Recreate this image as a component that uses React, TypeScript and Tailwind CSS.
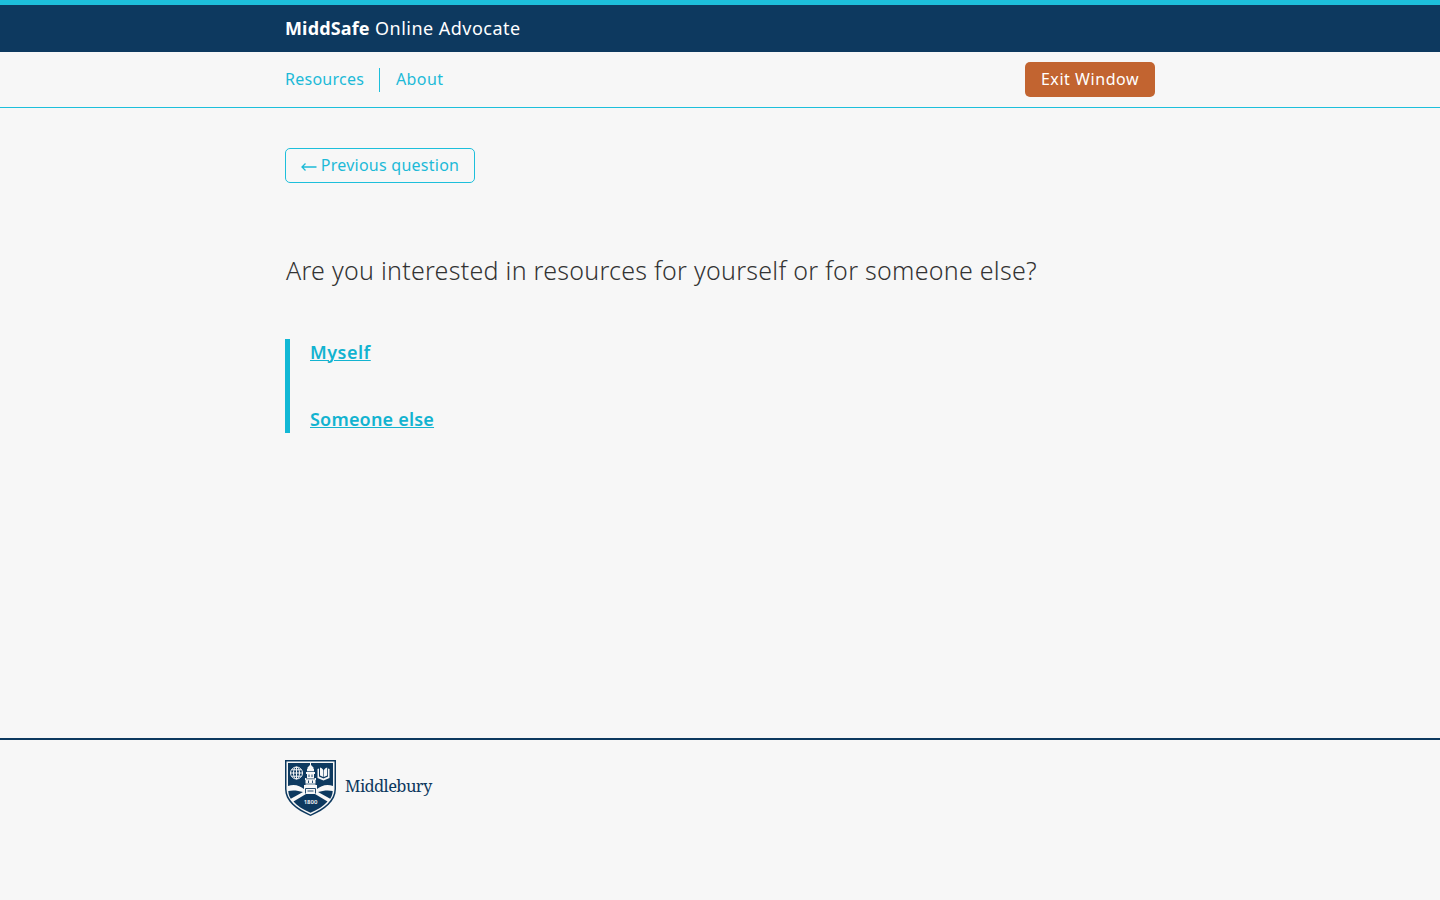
function Shield() {
  return (
    <svg width="51" height="56" viewBox="0 0 51 56" className="block shrink-0" aria-hidden="true">
      <path d="M0 0H51V29C51 41 40 50 25.500 56C11 50 0 41 0 29Z" fill="#0d395f" />
      <path d="M1.500 1.500H49.500V29C49.500 40 39 48.600 25.500 54.400C12 48.600 1.500 40 1.500 29Z" fill="#f7f7f7" />
      <path d="M3 3H48V26C42 23.500 36 25.500 32 29H19C15 25.500 9 23.500 3 26Z" fill="#0d395f" />
      <path d="M8.500 41.500L21 34H30L42.500 41.500C38.500 46 33 49.600 25.500 52.800C18 49.600 12.500 46 8.500 41.500Z" fill="#0d395f" />
      <path d="M3.300 31C8 30 13 30.500 18 32L5.800 38.800C4.300 36.500 3.500 34 3.300 31ZM47.700 31C43 30 38 30.500 33 32L45.200 38.800C46.700 36.500 47.500 34 47.700 31Z" fill="#0d395f" />
      <g fill="none" stroke="#f7f7f7" strokeWidth="1">
        <circle cx="11.500" cy="13" r="6" />
        <ellipse cx="11.500" cy="13" rx="3" ry="6" />
        <path d="M11.500 7V19M5.500 13H17.500M6.700 9.800H16.300M6.700 16.200H16.300" />
      </g>
      <path d="M32.500 9L34 8.500V16.500L38.500 18.500L43 16.500V8.500L44.500 9V18L38.500 20.500L32.500 18Z" fill="#f7f7f7" />
      <path d="M35 7.500C37 8 38 9 38.300 10.500V17L35 15.500ZM42.200 7.500C40.200 8 39.200 9 38.900 10.500V17L42.200 15.500Z" fill="#f7f7f7" />
      <path d="M25 2H26V5L28.500 7.500V9H29V12H30V14H29V18H31V20H30.500V25H32V33H19V25H20.500V20H20V18H22V14H21V12H22V9H22.500V7.500L25 5Z" fill="#f7f7f7" />
      <path d="M22 11.500H29M21 18.800H30M20 24H31" stroke="#0d395f" strokeWidth="0.700" />
      <path d="M24 14.500V17M27 14.500V17M23.500 20.500V23M27.500 20.500V23M20.500 33.500V28.500H30.500V33.500M22.500 31H28.500" fill="none" stroke="#0d395f" strokeWidth="0.900" />
      <text x="25.500" y="44.300" textAnchor="middle" fill="#f7f7f7" fontSize="6" fontWeight="600" fontFamily="Noto Sans, sans-serif">1800</text>
    </svg>
  );
}

export default function App() {
  return (
    <div className="flex min-h-screen flex-col bg-[#f7f7f7] font-['Noto_Sans',sans-serif] text-[#333]">
      <header className="h-[52px] border-t-[5px] border-[#1dbfdb] bg-[#0d395f]">
        <div className="mx-auto flex h-[47px] w-[870px] items-center whitespace-pre text-[18px] text-white">
          <span className="w-[90px] font-bold tracking-[0.15px]">MiddSafe</span>
          <span className="tracking-[0.48px]">Online Advocate</span>
        </div>
      </header>
      <nav className="h-14 border-b border-[#1dbfdb]">
        <div className="mx-auto flex h-[55px] w-[870px] items-center justify-between">
          <div className="flex items-center text-[16px] text-[#1dbad7]">
            <a href="#" className="h-6 w-[95px] border-r border-[#1dbfdb] leading-[22px] tracking-[0.25px]">Resources</a>
            <a href="#" className="h-6 pl-4 leading-[22px] tracking-[0.4px]">About</a>
          </div>
          <button className="flex h-[35px] w-[130px] items-center justify-center rounded-[5px] bg-[#c26430] pb-0.5 text-[16px] tracking-[0.55px] text-white">Exit Window</button>
        </div>
      </nav>
      <main className="mx-auto flex h-[630px] w-[870px] flex-col items-start pt-10">
        <button className="flex h-[35px] w-[190px] items-center justify-center gap-1 rounded-[5px] border border-[#1dbfdb] pb-0.5 text-[16px] text-[#1dbad7]">
          <svg width="16" height="10" viewBox="0 0 16 10" fill="none" stroke="currentColor" strokeWidth="1.300" className="mt-1"><path d="M15.500 5H1M4.500 1.500L1 5L4.500 8.500" /></svg>
          <span className="whitespace-nowrap tracking-[0.25px]">Previous question</span>
        </button>
        <h1 className="mt-[67px] whitespace-nowrap pl-px text-[25px] font-light leading-10 tracking-[0.27px]">Are you interested in resources for yourself or for someone else?</h1>
        <div className="mt-[49px] flex h-[94px] flex-col items-start justify-between border-l-[5px] border-[#12b8d5] pl-5 text-[18px] font-semibold leading-[27px] text-[#12b3d0]">
          <a href="#" className="tracking-[0.5px] underline decoration-1 underline-offset-1">Myself</a>
          <a href="#" className="tracking-[0.2px] underline decoration-1 underline-offset-1">Someone else</a>
        </div>
      </main>
      <footer className="border-t-2 border-[#0d395f]">
        <div className="mx-auto flex w-[870px] pt-5">
          <Shield />
          <span className="ml-[9px] mt-[13px] font-['Noto_Serif','Liberation_Serif',serif] text-[16.5px] leading-[26px] tracking-[-0.6px] text-[#0d395f]">Middlebury</span>
        </div>
      </footer>
    </div>
  );
}
